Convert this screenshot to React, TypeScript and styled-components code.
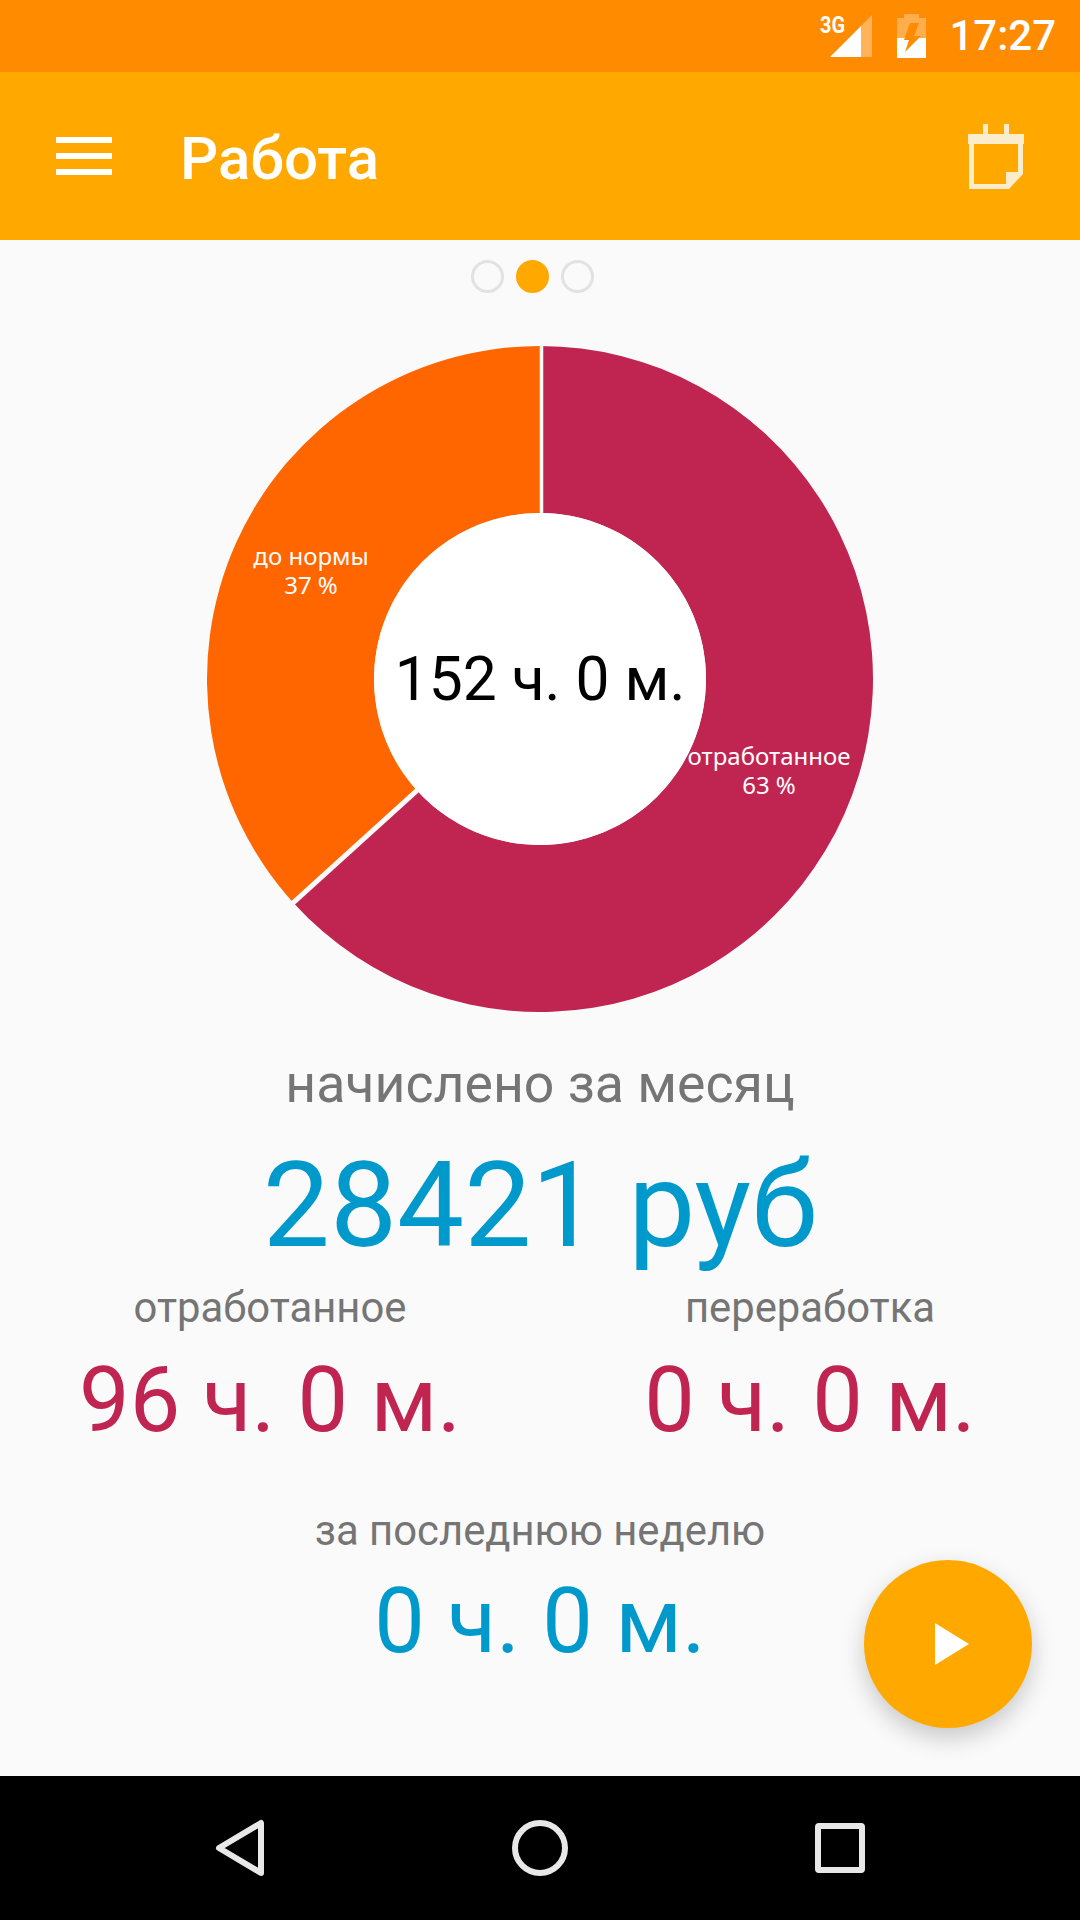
import styled, { createGlobalStyle } from 'styled-components';

const AMBER = '#ffa900';
const CRIMSON = '#c02552';
const ORANGE = '#ff6600';
const BLUE = '#0099cc';
const PAGE = '#fafafa';
const STATUS = '#ff8b00';

// angle of the worked/remaining boundary, clockwise from 12 o'clock
const SPLIT_ANGLE = 227.8;

const polar = (r: number, deg: number) => {
  const a = (deg * Math.PI) / 180;
  return [333 + r * Math.sin(a), 333 - r * Math.cos(a)];
};

const ringPath = (from: number, to: number, outer: number, inner: number) => {
  const large = to - from > 180 ? 1 : 0;
  const [x1, y1] = polar(outer, from);
  const [x2, y2] = polar(outer, to);
  const [x3, y3] = polar(inner, to);
  const [x4, y4] = polar(inner, from);
  return `M${x1} ${y1}A${outer} ${outer} 0 ${large} 1 ${x2} ${y2}L${x3} ${y3}A${inner} ${inner} 0 ${large} 0 ${x4} ${y4}Z`;
};

const Donut = () => {
  const [ax, ay] = polar(164, SPLIT_ANGLE);
  const [bx, by] = polar(336, SPLIT_ANGLE);
  return (
    <svg width="666" height="666" viewBox="0 0 666 666">
      <path d={ringPath(0, SPLIT_ANGLE, 333, 166)} fill={CRIMSON} />
      <path d={ringPath(SPLIT_ANGLE, 360, 333, 166)} fill={ORANGE} />
      <circle cx="333" cy="333" r="166" fill="#fff" />
      <line x1="334.5" y1="-2" x2="334.5" y2="167" stroke={PAGE} strokeWidth="3.5" />
      <line x1={ax} y1={ay} x2={bx} y2={by} stroke={PAGE} strokeWidth="5" />
    </svg>
  );
};

export default function App() {
  return (
    <>
      <GlobalStyle />
      <Screen>
        <StatusBar>
          <SignalIcon viewBox="0 0 52 42" width="52" height="42">
            <path d="M41 11 52 0v42H41z" fill="#fff" opacity="0.35" />
            <path d="M10 42 41 11v31z" fill="#fff" />
            <text x="0" y="18" fontFamily="Roboto, sans-serif" fontSize="24" fontWeight="700" fill="#fff" textLength="25" lengthAdjust="spacingAndGlyphs">3G</text>
          </SignalIcon>
          <BatteryIcon viewBox="0 0 29 44" width="29" height="44">
            <path d="M0 4h7V0h15v4h7v20H0z" fill="#fff" opacity="0.3" />
            <path d="M0 24h29v20H0z" fill="#fff" />
            {/* the bolt is cut out of both the empty and the charged part */}
            <path d="M13 9h9l-5 13h7L8 38l4-12H7z" fill={STATUS} />
          </BatteryIcon>
          <Clock>17:27</Clock>
        </StatusBar>

        <Toolbar>
          <MenuIcon>
            <span />
            <span />
            <span />
          </MenuIcon>
          <Title>Работа</Title>
          <svg width="56" height="65" viewBox="0 0 56 65">
            <path
              fill="#fbeccb"
              d="M15 0h5v10h-5zM36 0h5v10h-5zM0 10h56v10H0zM1 20h5v40h32v5H1zM50 20h5v28h-5zM38 48h17v2L41 65h-3z"
            />
          </svg>
        </Toolbar>

        <Content>
          <Pager>
            <PagerDot />
            <PagerDot $active />
            <PagerDot />
          </Pager>

          <ChartWrap>
            <Donut />
            <ChartTotal>152 ч. 0 м.</ChartTotal>
            <SliceLabel $center={104} $top={195}>
              до нормы
              <br />
              37 %
            </SliceLabel>
            <SliceLabel $center={562} $top={395}>
              отработанное
              <br />
              63 %
            </SliceLabel>
          </ChartWrap>

          <Caption $size={53.6} $top={40}>начислено за месяц</Caption>
          <Amount>28421 руб</Amount>

          <Columns>
            <Column>
              <Caption $size={41.8}>отработанное</Caption>
              <HoursValue $color={CRIMSON}>96 ч. 0 м.</HoursValue>
            </Column>
            <Column>
              <Caption $size={41.8}>переработка</Caption>
              <HoursValue $color={CRIMSON}>0 ч. 0 м.</HoursValue>
            </Column>
          </Columns>

          <Caption $size={41.8} $top={51}>за последнюю неделю</Caption>
          <HoursValue $color={BLUE} $top={11}>0 ч. 0 м.</HoursValue>

          <Fab>
            <svg width="34" height="42" viewBox="0 0 34 42">
              <path d="M0 0l34 21L0 42z" fill="#fff" />
            </svg>
          </Fab>
        </Content>

        <NavBar>
          <svg width="50" height="58" viewBox="0 0 50 58">
            <path d="M46 4v50L4 29z" fill="none" stroke="#e8e8e8" strokeWidth="6" strokeLinejoin="round" />
          </svg>
          <svg width="58" height="58" viewBox="0 0 58 58">
            <circle cx="29" cy="29" r="25" fill="none" stroke="#e8e8e8" strokeWidth="6" />
          </svg>
          <svg width="50" height="50" viewBox="0 0 50 50">
            <rect x="3" y="3" width="44" height="44" rx="1" fill="none" stroke="#e8e8e8" strokeWidth="6" strokeLinejoin="round" />
          </svg>
        </NavBar>
      </Screen>
    </>
  );
}

const GlobalStyle = createGlobalStyle`
  html, body {
    margin: 0;
    padding: 0;
    background: ${PAGE};
    font-family: Roboto, "Liberation Sans", sans-serif;
  }
`;

const Screen = styled.div`
  width: 1080px;
  height: 1920px;
  display: flex;
  flex-direction: column;
  overflow: hidden;
`;

const StatusBar = styled.div`
  height: 72px;
  flex: none;
  background: ${STATUS};
  display: flex;
  align-items: flex-start;
  justify-content: flex-end;
  padding-right: 24px;
  color: #fff;
`;

const SignalIcon = styled.svg`
  margin-top: 15px;
  margin-right: 25px;
  overflow: visible;
`;

const BatteryIcon = styled.svg`
  margin-top: 14px;
  margin-right: 23px;
`;

const Clock = styled.div`
  font-size: 42px;
  font-weight: 500;
  line-height: 72px;
`;

const Toolbar = styled.div`
  height: 168px;
  flex: none;
  background: ${AMBER};
  display: flex;
  align-items: center;
  padding: 0 56px;
`;

const MenuIcon = styled.div`
  width: 56px;
  display: flex;
  flex-direction: column;
  gap: 10px;

  span {
    height: 6px;
    background: #fff;
  }
`;

const Title = styled.div`
  flex: 1;
  margin-left: 68px;
  margin-top: 5px;
  font-size: 60px;
  font-weight: 500;
  color: #fff;
`;

const Content = styled.div`
  position: relative;
  flex: 1;
  background: ${PAGE};
  display: flex;
  flex-direction: column;
  align-items: center;
`;

const Pager = styled.div`
  display: flex;
  gap: 12px;
  margin: 20px 15px 0 0;
`;

const PagerDot = styled.div<{ $active?: boolean }>`
  width: 33px;
  height: 33px;
  box-sizing: border-box;
  border-radius: 50%;
  border: 3px solid ${p => (p.$active ? AMBER : '#e2e2e2')};
  background: ${p => (p.$active ? AMBER : 'transparent')};
`;

const ChartWrap = styled.div`
  position: relative;
  width: 666px;
  height: 666px;
  margin-top: 53px;
`;

const ChartTotal = styled.div`
  position: absolute;
  inset: 0;
  display: flex;
  align-items: center;
  justify-content: center;
  font-size: 60.5px;
  color: #000;
`;

const SliceLabel = styled.div<{ $center: number; $top: number }>`
  position: absolute;
  left: ${p => p.$center - 120}px;
  top: ${p => p.$top}px;
  width: 240px;
  text-align: center;
  font-family: "Noto Sans", sans-serif;
  font-size: 24px;
  line-height: 29px;
  color: #fff;
`;

const Caption = styled.div<{ $size: number; $top?: number }>`
  margin-top: ${p => p.$top ?? 6}px;
  font-size: ${p => p.$size}px;
  color: #757575;
  line-height: 1.2;
`;

const Amount = styled.div`
  margin-top: 17px;
  font-size: 119.5px;
  line-height: 144px;
  color: ${BLUE};
`;

const Columns = styled.div`
  align-self: stretch;
  display: grid;
  grid-template-columns: 1fr 1fr;
`;

const Column = styled.div`
  display: flex;
  flex-direction: column;
  align-items: center;
`;

const HoursValue = styled.div<{ $color: string; $top?: number }>`
  margin-top: ${p => p.$top ?? 14}px;
  font-size: 90px;
  line-height: 1.2;
  color: ${p => p.$color};
`;

const Fab = styled.div`
  position: absolute;
  left: 864px;
  top: 1320px;
  width: 168px;
  height: 168px;
  border-radius: 50%;
  background: ${AMBER};
  display: flex;
  align-items: center;
  justify-content: center;
  box-shadow: 0 10px 24px rgba(0, 0, 0, 0.2);

  svg {
    margin-left: 8px;
  }
`;

const NavBar = styled.div`
  height: 144px;
  flex: none;
  background: #000;
  display: flex;
  align-items: center;
  justify-content: space-between;
  padding: 0 215px;
`;
